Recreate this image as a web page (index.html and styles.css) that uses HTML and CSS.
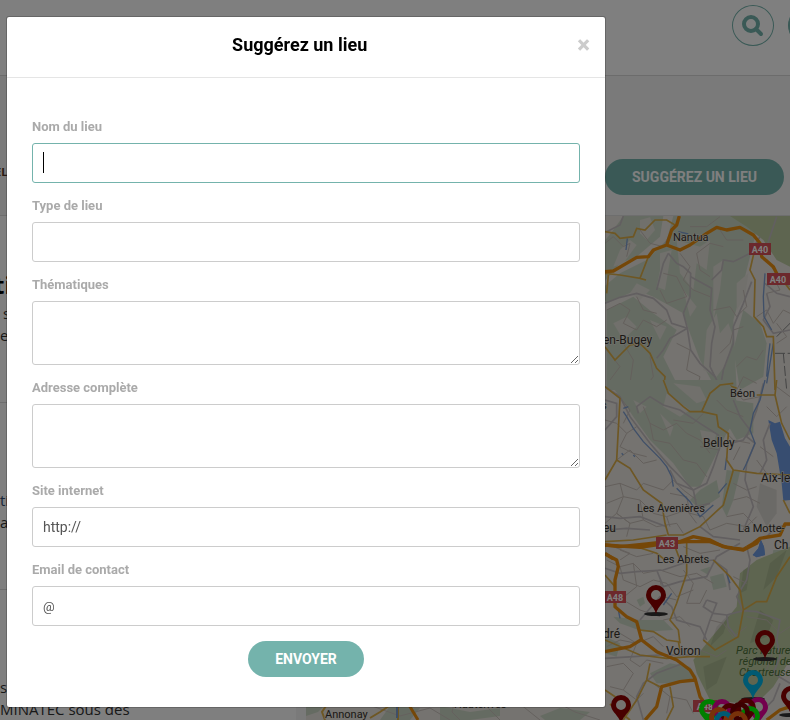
FILE: index.html
```html
<!DOCTYPE html>
<html lang="fr">
<head>
  <meta charset="UTF-8" />
  <meta name="viewport" content="width=device-width, initial-scale=1.0" />
  <title>Suggérez un lieu</title>
  <link rel="stylesheet" href="styles.css">
</head>
<body>
  <header class="site-header">
    <button type="button" class="round-btn" aria-label="Rechercher">
      <svg width="22" height="22" viewBox="0 0 22 22">
        <circle cx="9" cy="9" r="7" fill="none" stroke="#74b3ac" stroke-width="4" />
        <path d="M14 14l5 5" stroke="#74b3ac" stroke-width="4" stroke-linecap="round" />
      </svg>
    </button>
    <button type="button" class="round-btn full" aria-label="Menu"></button>
  </header>

  <div class="toolbar">
    <a href="#" class="tab">EL</a>
    <button type="button" class="btn">Suggérez un lieu</button>
  </div>

  <main class="content">
    <!-- Results -->
    <section class="results">
      <article class="result">
        <h2>ti</h2>
        <p class="indent">s</p>
        <p>e</p>
      </article>
      <article class="result second">
        <p><a href="#">ti</a></p>
        <p>a</p>
      </article>
      <article class="result third">
        <p>se</p>
        <p>MINATEC sous des</p>
      </article>
    </section>

    <!-- Map -->
    <section class="map">
      <svg width="484" height="504" viewBox="306 216 484 504">
        <defs>
          <g id="pin">
            <ellipse cx="0" cy="0" rx="12" ry="2" fill="#333" />
            <path fill-rule="evenodd" d="M0 0C-2-9-10-12-10-19A10 10 0 0 1 10-19C10-12 2-9 0 0ZM0-24A5 5 0 1 0 0-14A5 5 0 1 0 0-24Z" />
          </g>
        </defs>

        <!-- North -->
        <svg x="600" y="210" width="190" height="180" viewBox="0 0 570 540">
          <g class="forest">
            <path d="M0 110L40 60L70 18L190 18L180 80L110 140L60 160L0 230Z" />
            <path d="M220 18L480 18L470 60L440 180L420 260L400 330L410 540L350 540L300 450L270 370L250 310L160 260L110 240L20 280L0 240L60 190L140 150L200 90Z" />
            <path d="M20 300L100 260L160 310L230 360L190 440L240 540L20 540Z" />
            <path d="M430 300L480 340L500 400L490 500L420 540L400 420Z" />
          </g>
          <path class="park" d="M390 18H570V170L530 150L490 90L440 50Z" />
          <g class="clearing">
            <path d="M120 30L150 22L165 60L140 90L120 70Z" />
            <path d="M180 130L215 120L205 180L195 240L170 230L180 180Z" />
            <path d="M230 90L300 110L330 90L320 180L290 160L280 240L240 190Z" />
            <path d="M340 170L370 150L360 240L340 330Z" />
            <path d="M320 360L350 310L360 370L385 340L400 380L380 460L350 500L310 480Z" />
            <path d="M60 120L90 90L110 105L70 160L40 170Z" />
            <path d="M110 220L150 240L120 270L90 250Z" />
            <path d="M250 240L290 290L270 320Z" />
            <path d="M410 220L445 190L435 260L410 300Z" />
            <path d="M40 340L80 320L110 350L70 390Z" />
            <path d="M150 330L200 350L180 390Z" />
          </g>
          <g class="lane">
            <path d="M15 100L40 80L70 110L90 100L80 140M120 60L150 100L190 110L210 70M240 130L270 170L250 210L280 240L330 260" />
            <path d="M20 300L60 280L90 300L70 340L110 360L130 330L170 350L200 330M110 260L130 300L170 310" />
            <path d="M330 200L300 180L290 130L330 100L370 110M340 300L390 290L410 320L440 290L430 240" />
            <path d="M360 430L390 400L400 360L430 350M190 190L230 200L260 260L200 280L180 240" />
            <path d="M470 320L500 300L520 340L550 300L570 310M500 250L540 240L520 200L570 230M530 340L560 380L530 400" />
            <path d="M20 420L60 470L30 510M70 400L100 450L90 520M150 440L160 500L130 540M230 400L270 420L260 480L300 500L290 540" />
            <path d="M410 470L440 440L470 450L490 420M410 540L430 500L470 520M360 60L380 90L430 90M270 50L320 50L360 20" />
          </g>
          <g class="street">
            <path d="M15 280L60 262L110 250L160 265L200 300L215 340L262 355L250 310L270 260L272 190L250 170L230 160L205 130" />
            <path d="M272 200L335 235L330 300L345 350L335 400L330 470L350 510L370 540" />
            <path d="M262 355L272 420L300 460L345 500M262 355L210 385L190 420L170 445M20 65L60 45L70 18" />
            <path d="M480 80L450 130L430 140L400 155L370 150L365 180L335 210M455 215L430 280L400 350L400 400L370 480L360 540" />
            <path d="M205 130L190 160L170 240M500 250L510 290L490 330L520 370L570 360M495 220L530 250L570 260M500 110L520 50L530 20" />
          </g>
          <path class="rail" d="M525 430H570M550 430L560 540M570 340L530 380" />
          <g class="water">
            <path d="M82 85L78 120M235 65L265 72M495 190L490 260L492 320L515 360M510 400L505 440L500 500M515 430L520 400L500 520" />
          </g>
          <g class="road">
            <path d="M15 65L45 70L60 85L100 80L110 55L135 60L165 30L200 30L225 45" />
            <path d="M15 190L60 195L120 205L145 140L170 115M25 195L20 250M120 205L138 210" />
            <path d="M465 115L450 180L465 210L462 320L490 350L500 380L520 380L525 540" />
            <path d="M15 410L45 450L90 405L120 400L150 430L170 475L195 500L190 540M335 540L370 520L410 535M570 240L540 200L500 150" />
          </g>
          <path class="motorway" d="M15 185L40 183L110 142L145 140L160 120L200 105L240 120L270 105L320 70L350 52L380 60L420 52L460 75L480 100L485 140L520 170L535 200L570 222M200 105L215 60L230 45L238 18" />
        </svg>

        <!-- Middle -->
        <svg x="600" y="380" width="190" height="180" viewBox="0 0 570 540">
          <g class="forest">
            <path d="M20 0L380 0L400 30L420 100L380 160L350 220L300 320L270 320L220 250L150 180L100 110L60 50Z" />
            <path d="M300 330L350 300L360 350L300 390L270 360Z" />
            <path d="M380 270L420 275L400 360L380 410L365 380Z" />
            <path d="M400 60L460 70L460 160L410 180L380 130Z" />
            <path d="M520 510H570V540H515Z" />
          </g>
          <g class="clearing">
            <path d="M100 60L140 80L120 100Z" />
            <path d="M200 40L270 90L240 110L190 80Z" />
            <path d="M300 150L350 160L340 190L310 190Z" />
            <path d="M180 100L220 140L210 170Z" />
            <path d="M220 10L300 20L320 60L290 70Z" />
          </g>
          <path class="relief" d="M480 310L530 330L530 400L500 440L470 380Z" />
          <path class="lake" d="M505 120L525 130L540 125L555 175L570 200V360L550 362L545 310L530 220L515 180Z" />
          <path class="lake" d="M482 478L492 500L495 525L470 532L458 525L475 505Z" />
          <g class="lane">
            <path d="M15 120L50 130L80 160L60 200L100 220L140 230M50 40L90 90L70 130M80 160L110 140M50 240L90 210L130 250L170 240" />
            <path d="M130 80L150 130L190 150L230 130L260 160L300 180L330 220M150 130L160 180L210 190L250 240L290 250L320 290M220 120L280 130L310 100" />
            <path d="M15 320L60 310L110 330L130 310L190 330L220 300L250 330L290 360M20 370L70 350L120 360L160 400L200 410L260 390L290 430M60 310L70 350L50 400L90 430L130 420L120 360" />
            <path d="M15 430L50 400L90 430L80 470M130 420L170 440L230 430L250 460M200 410L210 440M210 340L260 350L270 400L310 410L330 450L380 430L440 440L470 410" />
            <path d="M360 140L400 180L450 190M400 30L430 60L480 50M350 60L380 90L430 110M420 200L400 240M300 200L360 210M40 500L90 520L60 540M250 500L300 520L360 510M400 310L440 330L470 320M400 360L440 350L480 370M380 410L430 400L460 430" />
            <path d="M500 80L530 110L560 80M480 200L520 230M470 240L500 280M530 20L570 50" />
          </g>
          <g class="street">
            <path d="M15 20L60 50L90 110L150 190L210 260L280 330L320 310L340 260L360 200L355 165L300 130L240 90L190 75L150 50L110 80L115 100" />
            <path d="M15 60L50 70L50 110L15 150M15 410L60 415L120 410L200 440M210 270L230 310L280 330M280 330L290 380L330 370" />
            <path d="M400 60L420 110L450 150L430 180L390 190M490 10L470 90L440 170L465 190L440 250L435 300L460 380L430 450M510 130L490 180L500 240L480 280" />
            <path d="M15 450L80 445L150 450M300 440L340 470L420 480M500 470L530 440L570 435" />
          </g>
          <g class="water">
            <path d="M70 95L80 110L100 145L130 185L180 235L200 260L215 290L220 320M230 325L270 365L300 410L340 375M380 230L375 270M495 0L480 60L460 100L450 150L465 190L440 250L430 270M355 340L380 310" />
            <path d="M70 85L85 80M65 220L70 225M100 225L105 230" />
          </g>
          <g class="road">
            <path d="M190 0L205 40L250 80L270 95L305 95L350 105L355 140L385 160L380 240L400 270L470 280L570 285M305 95L330 40L360 15L400 10M470 45L525 45L530 0M525 45L545 130L570 180" />
            <path d="M15 20L60 55L50 240L15 300M50 240L90 265L130 330L185 370L195 430L205 465L250 465L300 440L370 375L400 270" />
            <path d="M15 485L100 480L200 465M110 500L170 520L195 540M225 500L240 540M550 360L570 400" />
          </g>
          <path class="motorway" d="M15 495L60 500L140 492L200 485L240 485L280 470L330 480L370 500L430 508L460 490L480 475L540 465L555 432H570M15 520L45 540" />
        </svg>

        <!-- South -->
        <svg x="600" y="540" width="190" height="180" viewBox="0 0 570 540">
          <g class="park">
            <path d="M470 60L570 20V360L520 440L480 480L420 490L330 480L290 400L280 360L320 310L410 200L420 100Z" />
          </g>
          <g class="forest">
            <path d="M40 230L120 240L190 240L220 270L130 275L60 250Z" />
            <path d="M150 400L210 370L270 380L290 410L230 430L170 430Z" />
            <path d="M330 110L370 100L380 140L340 150Z" />
            <path d="M300 90L330 80L325 105Z" />
            <path d="M15 290L60 310L50 350L15 340Z" />
            <path d="M110 180L130 170L135 190L120 200Z" />
          </g>
          <g class="relief">
            <path d="M510 70L560 30L530 110L490 150Z" />
            <path d="M390 220L370 280L330 320L350 260Z" />
            <path d="M480 210L520 240L500 290L450 310Z" />
            <path d="M310 380L380 350L350 430L320 450Z" />
            <path d="M430 90L450 80L440 150L420 160Z" />
          </g>
          <path class="lake" d="M482 -2L492 20L495 45L470 52L458 45L475 25Z" />
          <g class="lane">
            <path d="M20 60L60 80L100 70L130 100L180 90L240 110L290 100L340 130M60 30L110 50L160 40M60 80L70 120L120 140L160 120L200 130L230 170L280 150M100 70L110 140L60 180" />
            <path d="M70 180L120 210L180 230M180 120L190 170L230 180M250 90L280 130L260 190L300 190L320 150M190 240L240 230L270 260M60 280L110 310L160 290L190 320M20 320L60 300L110 310L90 360L120 380M20 380L70 370L100 400L70 450L30 440M120 380L140 360L190 370" />
            <path d="M160 430L210 470L200 520M70 450L110 480L130 460M210 470L260 480L280 520M330 240L370 250L400 290L440 260M300 330L350 350L380 330M400 110L440 130M440 230L500 240L540 280M540 280L570 260M520 330L500 390" />
          </g>
          <g class="street">
            <path d="M15 85L60 100L110 95L190 90L250 70L340 60L380 90L390 150M170 90L190 140L240 125L320 110L350 50L420 10" />
            <path d="M120 240L180 170L215 200L230 240L300 260L320 300M320 180L310 200L340 220L380 225L430 212L470 215L540 240L530 300L540 350L520 400L570 430M430 212L410 170L440 120L450 60L440 20" />
            <path d="M320 180L350 190L330 240L310 300M380 225L385 260L410 290M15 355L100 350L180 345L270 345M130 540L110 470L130 430L170 400L250 370M540 430L520 480L500 500" />
          </g>
          <g class="water">
            <path d="M215 160L190 195M55 210L60 235M378 95L390 130" />
          </g>
          <g class="road">
            <path d="M260 0V100L230 190L210 240L235 270L240 310M340 60L390 110L420 150L430 210L470 185L500 185L530 110L570 50M430 210L415 290L345 330L310 300" />
            <path d="M15 105L45 140M15 300L120 345L200 355L270 350L330 350M120 270L160 275L200 300L235 305L240 330M70 540L110 480L140 420L150 370M140 420L180 440M200 540L220 500L210 440M15 450L60 480" />
          </g>
          <path class="motorway" d="M15 15L120 22L200 10L260 5L330 5L380 22L430 30L470 10L480 -5M15 42L50 60L55 80L45 120V200L80 230L110 245L125 300L170 335L230 360L270 390L285 415L300 470L330 510M15 335L90 320L125 298M135 540L170 500L185 440L240 425L285 420M500 540L540 510L570 500" />
        </svg>

        <!-- Strip under the dialog -->
        <g class="forest">
          <path d="M306 700H330L318 712L306 716Z" />
          <path d="M390 706L420 708L410 720H380ZM440 706L470 712L500 708V716L470 720H440ZM540 716L560 708L590 712L580 720H545Z" />
        </g>
        <g class="thin">
          <path d="M372 706L400 716L430 708L450 720M455 700L452 712L460 720M480 700L500 720M520 704L540 720M560 704L575 712L600 720" />
        </g>
        <path class="stroke-yellow" d="M330 700L322 712L325 720M392 704L380 712L370 718M398 700V720M610 704L630 720" />
        <path class="stroke-blue" d="M397 704V718" />
        <path class="stroke-orange" d="M406 700L418 720" />

        <!-- Road signs -->
        <g class="sign">
          <rect x="749" y="243" width="22" height="12" />
          <rect x="767" y="273" width="24" height="12" />
          <rect x="656" y="537" width="22" height="12" />
          <rect x="604" y="591" width="22" height="12" />
          <rect x="693" y="700" width="24" height="12" />
          <text x="760" y="253">A40</text>
          <text x="778" y="283">A40</text>
          <text x="667" y="547">A43</text>
          <text x="615" y="601">A48</text>
          <text x="705" y="710">A48</text>
        </g>

        <!-- Towns -->
        <g class="town">
          <text x="673" y="241">Nantua</text>
          <text x="730" y="397">Béon</text>
          <text x="637" y="512">Les Avenières</text>
          <text x="738" y="532">La Motte-</text>
          <text x="657" y="563">Les Abrets</text>
          <text x="325" y="718">Annonay</text>
          <text x="454" y="708">Hauterives</text>
          <text x="601" y="409">s</text>
        </g>
        <g class="town big">
          <text x="603" y="344">en-Bugey</text>
          <text x="703" y="447">Belley</text>
          <text x="761" y="482">Aix-le</text>
          <text x="603" y="532">eu</text>
          <text x="774" y="549">Ch</text>
          <text x="603" y="638">dré</text>
          <text x="666" y="655">Voiron</text>
        </g>
        <g class="park-name">
          <text x="736" y="654">Parc nature</text>
          <text x="739" y="665">régional de</text>
          <text x="739" y="676">Chartreuse</text>
        </g>

        <!-- Places -->
        <use href="#pin" x="656" y="614" fill="#900000" />
        <use href="#pin" x="765" y="659" fill="#900000" />
        <use href="#pin" x="621" y="724" fill="#900000" />
        <use href="#pin" x="791" y="715" fill="#900000" />
        <use href="#pin" x="753" y="699" fill="#00b4e6" />
        <use href="#pin" x="709" y="728" fill="#00ff00" />
        <use href="#pin" x="722" y="728" fill="#e6009b" />
        <use href="#pin" x="758" y="726" fill="#e6009b" />
        <use href="#pin" x="730" y="732" fill="#900000" />
        <use href="#pin" x="746" y="727" fill="#900000" />
        <use href="#pin" x="750" y="735" fill="#00ff00" />
        <use href="#pin" x="740" y="731" fill="#780000" />
        <use href="#pin" x="719" y="736" fill="#f06414" />
        <use href="#pin" x="724" y="740" fill="#00b4e6" />
        <use href="#pin" x="738" y="740" fill="#f06414" />
      </svg>
    </section>
  </main>

  <!-- Suggestion form -->
  <div class="modal-overlay">
    <div class="modal" role="dialog" aria-modal="true" aria-labelledby="modal-title">
      <div class="modal-header">
        <h1 id="modal-title">Suggérez un lieu</h1>
        <button type="button" class="close" aria-label="Fermer">×</button>
      </div>
      <form class="modal-body">
        <label for="place-name">Nom du lieu</label>
        <input type="text" id="place-name" autofocus />

        <label for="place-type">Type de lieu</label>
        <input type="text" id="place-type" />

        <label for="place-themes">Thématiques</label>
        <textarea id="place-themes"></textarea>

        <label for="place-address">Adresse complète</label>
        <textarea id="place-address"></textarea>

        <label for="place-site">Site internet</label>
        <input type="text" id="place-site" value="http://" />

        <label for="place-email">Email de contact</label>
        <input type="text" id="place-email" class="email" value="@" />

        <button type="submit" class="btn">Envoyer</button>
      </form>
    </div>
  </div>
</body>
</html>
```
FILE: styles.css
```css
* {
  box-sizing: border-box;
}

body {
  display: flex;
  flex-direction: column;
  margin: 0;
  height: 100vh;
  overflow: hidden;
  font-family: "Open Sans", sans-serif;
  color: #333;
  background: #fff;
}

/* Page */
.site-header {
  flex: none;
  display: flex;
  justify-content: flex-end;
  gap: 14px;
  height: 76px;
  padding-top: 5px;
  overflow: hidden;
  border-bottom: 1px solid #d8d8d8;
}

.round-btn {
  flex: none;
  display: flex;
  align-items: center;
  justify-content: center;
  width: 42px;
  height: 41px;
  padding: 0;
  border: 1px solid #74b3ac;
  border-radius: 50%;
  background: none;
}

.round-btn.full {
  margin-right: -40px;
  background: #74b3ac;
}

.toolbar {
  flex: none;
  display: flex;
  justify-content: space-between;
  align-items: flex-start;
  height: 140px;
  padding: 83px 6px 0 0;
  background: #f4f4f4;
  border-bottom: 1px solid #ddd;
}

.tab {
  padding-top: 5px;
  font-size: 11px;
  line-height: 16px;
  font-weight: bold;
  color: #503020;
  text-decoration: none;
  text-indent: -5px;
}

.btn {
  height: 36px;
  padding: 0 27px;
  border: none;
  border-radius: 18px;
  background: #74b3ac;
  color: #fff;
  font-family: "Roboto", sans-serif;
  font-size: 14px;
  font-weight: bold;
  text-transform: uppercase;
}

.content {
  flex: 1;
  min-height: 0;
  display: flex;
  overflow: hidden;
}

.results {
  flex: none;
  width: 306px;
  border-right: 10px solid #f4f4f4;
}

.result {
  height: 187px;
  padding-top: 52px;
  border-bottom: 1px solid #ddd;
}

.result.second,
.result.third {
  padding-top: 86px;
}

.result h2 {
  margin: 0;
  font-size: 24px;
  line-height: 34px;
  color: #000;
  text-indent: -6px;
}

.result p {
  margin: 0;
  font-size: 15px;
  line-height: 22px;
}

.result .indent {
  padding-left: 3px;
}

.result a {
  color: #334a70;
  text-decoration: none;
}

/* Map */
.map {
  flex: 1;
  overflow: hidden;
  background: #eae6e0;
}

.map svg {
  display: block;
}

.forest {
  fill: #cbd7c4;
}

.park {
  fill: #bccba0;
}

.clearing {
  fill: #e2e0d8;
}

.relief {
  fill: #000;
  opacity: 0.08;
}

.lake {
  fill: #6f9be0;
}

.lane {
  fill: none;
  stroke: #c8bfb8;
  stroke-width: 3;
}

.street {
  fill: none;
  stroke: #c4bec0;
  stroke-width: 5;
}

.thin {
  fill: none;
  stroke: #cac2bd;
}

.rail {
  fill: none;
  stroke: #888;
  stroke-width: 3;
  stroke-dasharray: 30 8;
}

.water {
  fill: none;
  stroke: #7f9fd0;
  stroke-width: 4;
}

.road {
  fill: none;
  stroke: #dcae48;
  stroke-width: 5;
}

.motorway {
  fill: none;
  stroke: #ea8e10;
  stroke-width: 10;
  stroke-linejoin: round;
}

.stroke-yellow {
  fill: none;
  stroke: #dcae48;
  stroke-width: 2;
}

.stroke-blue {
  fill: none;
  stroke: #7f9fd0;
  stroke-width: 2;
}

.stroke-orange {
  fill: none;
  stroke: #ea8e10;
  stroke-width: 3;
}

.sign {
  fill: #d85058;
}

.sign text {
  fill: #fff;
  font-family: "Roboto", sans-serif;
  font-size: 9px;
  font-weight: bold;
  text-anchor: middle;
}

.town {
  fill: #38332c;
  font-family: "Roboto", sans-serif;
  font-size: 11px;
  stroke: #eae6e0;
  stroke-width: 1;
  paint-order: stroke;
}

.town.big {
  font-size: 12px;
}

.park-name {
  fill: #4d7038;
  font-family: "Roboto", sans-serif;
  font-size: 11px;
  font-style: italic;
}

/* Modal */
.modal-overlay {
  position: fixed;
  inset: 0;
  padding: 16px 6px;
  background: rgba(0, 0, 0, 0.5);
}

.modal {
  max-width: 600px;
  background: #fff;
  background-clip: padding-box;
  border: 1px solid rgba(0, 0, 0, 0.2);
  border-radius: 3px;
}

.modal-header {
  display: flex;
  align-items: center;
  height: 61px;
  padding: 0 15px 4px;
  border-bottom: 1px solid #e5e5e5;
}

.modal-header h1 {
  flex: 1;
  margin: 0;
  text-align: center;
  font-family: "Roboto", sans-serif;
  font-size: 18px;
  line-height: 28px;
  color: #000;
}

.close {
  padding: 0;
  border: none;
  background: none;
  color: #ccc;
  font-family: "Roboto", sans-serif;
  font-size: 24px;
  line-height: 24px;
  font-weight: 900;
}

.modal-body {
  display: flex;
  flex-direction: column;
  padding: 41px 25px 30px;
}

.modal-body label {
  height: 24px;
  font-family: "Roboto", sans-serif;
  font-size: 13px;
  line-height: 16px;
  font-weight: bold;
  color: #aaa;
}

.modal-body input,
.modal-body textarea {
  display: block;
  width: 100%;
  height: 40px;
  margin: 0 0 15px;
  padding: 6px 10px;
  border: 1px solid #ccc;
  border-radius: 3px;
  background: #fff;
  color: #555;
  font-family: "Roboto", sans-serif;
  font-size: 14px;
}

.modal-body textarea {
  height: 64px;
  resize: vertical;
}

.modal-body .email {
  font-size: 13px;
}

/* Tall caret in the active field */
.modal-body input:focus {
  outline: none;
  border-color: #74b3ac;
  caret-color: transparent;
}

.modal-body input:placeholder-shown:focus,
.modal-body input:focus {
  background: linear-gradient(#000, #000) 10px 8px / 1px 21px no-repeat #fff;
}

.modal-body .btn {
  align-self: center;
}
```
